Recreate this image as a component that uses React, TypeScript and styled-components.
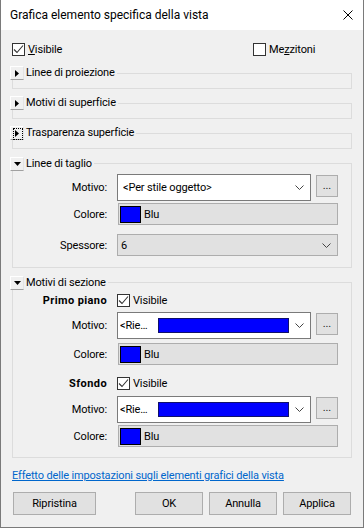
import React from "react";
import styled, { createGlobalStyle, css } from "styled-components";

const GlobalStyle = createGlobalStyle`
  html, body { margin: 0; padding: 0; background: #f0f0f0; }
  body {
    font-family: Roboto, "Noto Sans", "Liberation Sans", sans-serif;
    font-size: 11px;
    letter-spacing: -0.15px;
    color: #000;
  }
  * { box-sizing: border-box; }
`;

const Window = styled.div`
  width: 364px;
  height: 528px;
  background: #f0f0f0;
  border: 1px solid #7a7a7a;
  border-top: none;
  display: flex;
  flex-direction: column;
`;

const TitleBar = styled.div`
  height: 30px;
  flex: none;
  background: #fff;
  display: flex;
  align-items: center;
  justify-content: space-between;
  padding: 0 10px 0 9px;
`;

const Title = styled.span`
  font-size: 12px;
  letter-spacing: 0;
  color: #000;
`;

const CloseIcon = styled.svg`
  width: 10px;
  height: 10px;
  display: block;
`;

const Content = styled.div`
  padding: 0 11px;
  display: flex;
  flex-direction: column;
`;

const TopRow = styled.div`
  margin-top: 13px;
  height: 13px;
  display: grid;
  grid-template-columns: 241px auto;
  align-items: center;
`;

const CheckLabel = styled.label`
  display: inline-flex;
  align-items: center;
  gap: 3px;
  line-height: 13px;
`;

const Box = styled.span`
  width: 13px;
  height: 13px;
  border: 1px solid #333;
  background: #fff;
  display: inline-flex;
  align-items: center;
  justify-content: center;
  flex: none;
`;

const Underlined = styled.span`
  text-decoration: underline;
  text-underline-offset: 1px;
`;

const Group = styled.fieldset<{ $mt: number; $collapsed?: boolean; $pb?: number }>`
  margin: ${(p) => p.$mt}px 0 0;
  padding: 0 13px ${(p) => (p.$collapsed ? 8 : p.$pb ?? 0)}px 0;
  border: 1px solid #dcdcdc;
  min-width: 0;
`;

const Legend = styled.legend`
  padding: 0 2px 0 0;
  margin-left: -3px;
  height: 14px;
`;

const LegendInner = styled.span`
  display: inline-flex;
  align-items: center;
  gap: 2px;
  height: 14px;
  line-height: 14px;
`;

const Expander = styled.span<{ $focused?: boolean }>`
  position: relative;
  width: 14px;
  height: 14px;
  display: inline-flex;
  align-items: center;
  justify-content: center;
  background: #f0f0f0;
  border-top: 1px solid #fff;
  border-left: 1px solid #fff;
  border-bottom: 1px solid #a0a0a0;
  border-right: 1px solid #e3e3e3;
  ${(p) =>
    p.$focused &&
    css`
      &::after {
        content: "";
        position: absolute;
        left: 2px;
        top: 1px;
        width: 8px;
        height: 10px;
        border: 1px dotted #000;
      }
    `}
`;

const FieldRow = styled.div<{ $mt: number }>`
  display: grid;
  grid-template-columns: 94px 221px;
  column-gap: 10px;
  align-items: center;
  margin-top: ${(p) => p.$mt}px;
`;

const FieldLabel = styled.span<{ $bold?: boolean }>`
  text-align: right;
  font-weight: ${(p) => (p.$bold ? 700 : 400)};
  letter-spacing: ${(p) => (p.$bold ? "0.4px" : "-0.15px")};
  white-space: nowrap;
`;

const FieldCell = styled.div`
  display: flex;
  align-items: flex-start;
  gap: 5px;
`;

const ComboBox = styled.div<{ $pattern?: boolean }>`
  width: 194px;
  height: 27px;
  background: #fff;
  border: 1px solid #7a7a7a;
  display: grid;
  grid-template-columns: ${(p) => (p.$pattern ? "1fr 131px 21px" : "1fr 21px")};
  align-items: center;
  padding-left: ${(p) => (p.$pattern ? 2 : 5)}px;
`;

const ComboText = styled.span`
  white-space: nowrap;
  overflow: hidden;
`;

const PatternPreview = styled.span`
  height: 15px;
  background: #0000ff;
  border: 1px solid #10106a;
`;

const ChevronBox = styled.span`
  display: flex;
  align-items: center;
  justify-content: center;
`;

const BrowseButton = styled.span`
  width: 22px;
  height: 22px;
  margin-top: 1px;
  background: #e1e1e1;
  border: 1px solid #adadad;
  display: flex;
  align-items: center;
  justify-content: center;
  line-height: 10px;
  color: #222;
`;

const ColorField = styled.div`
  margin-left: 1px;
  width: 220px;
  height: 22px;
  background: #e1e1e1;
  border: 1px solid #adadad;
  display: flex;
  align-items: center;
  padding-left: 1px;
  gap: 3px;
`;

const Swatch = styled.span<{ $color: string }>`
  width: 21px;
  height: 17px;
  background: ${(p) => p.$color};
  border: 1px solid #000;
`;

const SelectField = styled.div`
  width: 221px;
  height: 22px;
  background: #e1e1e1;
  border: 1px solid #adadad;
  display: flex;
  align-items: center;
  justify-content: space-between;
  padding: 0 6px 0 3px;
`;

const CheckRow = styled.div<{ $mt: number }>`
  display: grid;
  grid-template-columns: 94px auto;
  column-gap: 10px;
  align-items: center;
  height: 15px;
  margin-top: ${(p) => p.$mt}px;
`;

const LinkText = styled.a`
  margin-top: 10px;
  line-height: 15px;
  color: #0066cc;
  text-decoration: underline;
  cursor: pointer;
  align-self: flex-start;
`;

const Footer = styled.div`
  margin-top: 9px;
  display: flex;
  align-items: center;
  padding: 0 1px;
  gap: 6px;
`;

const DialogButton = styled.button<{ $w: number; $push?: boolean }>`
  width: ${(p) => p.$w}px;
  height: 23px;
  background: #e1e1e1;
  border: 1px solid #adadad;
  font: inherit;
  letter-spacing: inherit;
  color: #000;
  padding: 0;
  margin-left: ${(p) => (p.$push ? "auto" : "0")};
`;

const Chevron = () => (
  <svg width="9" height="5" viewBox="0 0 9 5">
    <polyline points="0.5,0.5 4.5,4.5 8.5,0.5" fill="none" stroke="#444" strokeWidth="1" />
  </svg>
);

const CheckMark = () => (
  <svg width="11" height="11" viewBox="0 0 11 11">
    <polyline points="1,5.5 4,8.5 10,1.5" fill="none" stroke="#333" strokeWidth="1.1" />
  </svg>
);

const Checkbox: React.FC<{ checked?: boolean; children: React.ReactNode }> = ({ checked, children }) => (
  <CheckLabel>
    <Box>{checked && <CheckMark />}</Box>
    <span>{children}</span>
  </CheckLabel>
);

const TriangleRight = () => (
  <svg width="4" height="7" viewBox="0 0 4 7">
    <polygon points="0,0 4,3.5 0,7" fill="#000" />
  </svg>
);

const TriangleDown = () => (
  <svg width="7" height="4" viewBox="0 0 7 4">
    <polygon points="0,0 7,0 3.5,4" fill="#000" />
  </svg>
);

const GroupHeader: React.FC<{ expanded?: boolean; focused?: boolean; label: string }> = ({
  expanded,
  focused,
  label,
}) => (
  <Legend>
    <LegendInner>
      <Expander $focused={focused}>{expanded ? <TriangleDown /> : <TriangleRight />}</Expander>
      <span>{label}</span>
    </LegendInner>
  </Legend>
);

const PatternRow: React.FC<{ mt: number }> = ({ mt }) => (
  <FieldRow $mt={mt}>
    <FieldLabel>Motivo:</FieldLabel>
    <FieldCell>
      <ComboBox $pattern>
        <ComboText>&lt;Rie…</ComboText>
        <PatternPreview />
        <ChevronBox>
          <Chevron />
        </ChevronBox>
      </ComboBox>
      <BrowseButton>...</BrowseButton>
    </FieldCell>
  </FieldRow>
);

const ColorRow: React.FC<{ mt: number }> = ({ mt }) => (
  <FieldRow $mt={mt}>
    <FieldLabel>Colore:</FieldLabel>
    <ColorField>
      <Swatch $color="#0000ff" />
      <span>Blu</span>
    </ColorField>
  </FieldRow>
);

export default function App() {
  return (
    <>
      <GlobalStyle />
      <Window>
        <TitleBar>
          <Title>Grafica elemento specifica della vista</Title>
          <CloseIcon viewBox="0 0 10 10">
            <line x1="0.5" y1="0.5" x2="9.5" y2="9.5" stroke="#000" strokeWidth="1" />
            <line x1="9.5" y1="0.5" x2="0.5" y2="9.5" stroke="#000" strokeWidth="1" />
          </CloseIcon>
        </TitleBar>
        <Content>
          <TopRow>
            <Checkbox checked>
              <Underlined>V</Underlined>isibile
            </Checkbox>
            <Checkbox>
              Me<Underlined>z</Underlined>zitoni
            </Checkbox>
          </TopRow>

          <Group $mt={10} $collapsed>
            <GroupHeader label="Linee di proiezione" />
          </Group>
          <Group $mt={7} $collapsed>
            <GroupHeader label="Motivi di superficie" />
          </Group>
          <Group $mt={7} $collapsed>
            <GroupHeader label="Trasparenza superficie" focused />
          </Group>

          <Group $mt={7} $pb={11}>
            <GroupHeader label="Linee di taglio" expanded />
            <FieldRow $mt={4}>
              <FieldLabel>Motivo:</FieldLabel>
              <FieldCell>
                <ComboBox>
                  <ComboText>&lt;Per stile oggetto&gt;</ComboText>
                  <ChevronBox>
                    <Chevron />
                  </ChevronBox>
                </ComboBox>
                <BrowseButton>...</BrowseButton>
              </FieldCell>
            </FieldRow>
            <ColorRow mt={2} />
            <FieldRow $mt={9}>
              <FieldLabel>Spessore:</FieldLabel>
              <SelectField>
                <span>6</span>
                <Chevron />
              </SelectField>
            </FieldRow>
          </Group>

          <Group $mt={7} $pb={10}>
            <GroupHeader label="Motivi di sezione" expanded />
            <CheckRow $mt={4}>
              <FieldLabel $bold>Primo piano</FieldLabel>
              <Checkbox checked>Visibile</Checkbox>
            </CheckRow>
            <PatternRow mt={4} />
            <ColorRow mt={4} />
            <CheckRow $mt={11}>
              <FieldLabel $bold>Sfondo</FieldLabel>
              <Checkbox checked>Visibile</Checkbox>
            </CheckRow>
            <PatternRow mt={5} />
            <ColorRow mt={2} />
          </Group>

          <LinkText>Effetto delle impostazioni sugli elementi grafici della vista</LinkText>

          <Footer>
            <DialogButton $w={83}>Ripristina</DialogButton>
            <DialogButton $w={68} $push>
              OK
            </DialogButton>
            <DialogButton $w={68}>Annulla</DialogButton>
            <DialogButton $w={68}>Applica</DialogButton>
          </Footer>
        </Content>
      </Window>
    </>
  );
}
